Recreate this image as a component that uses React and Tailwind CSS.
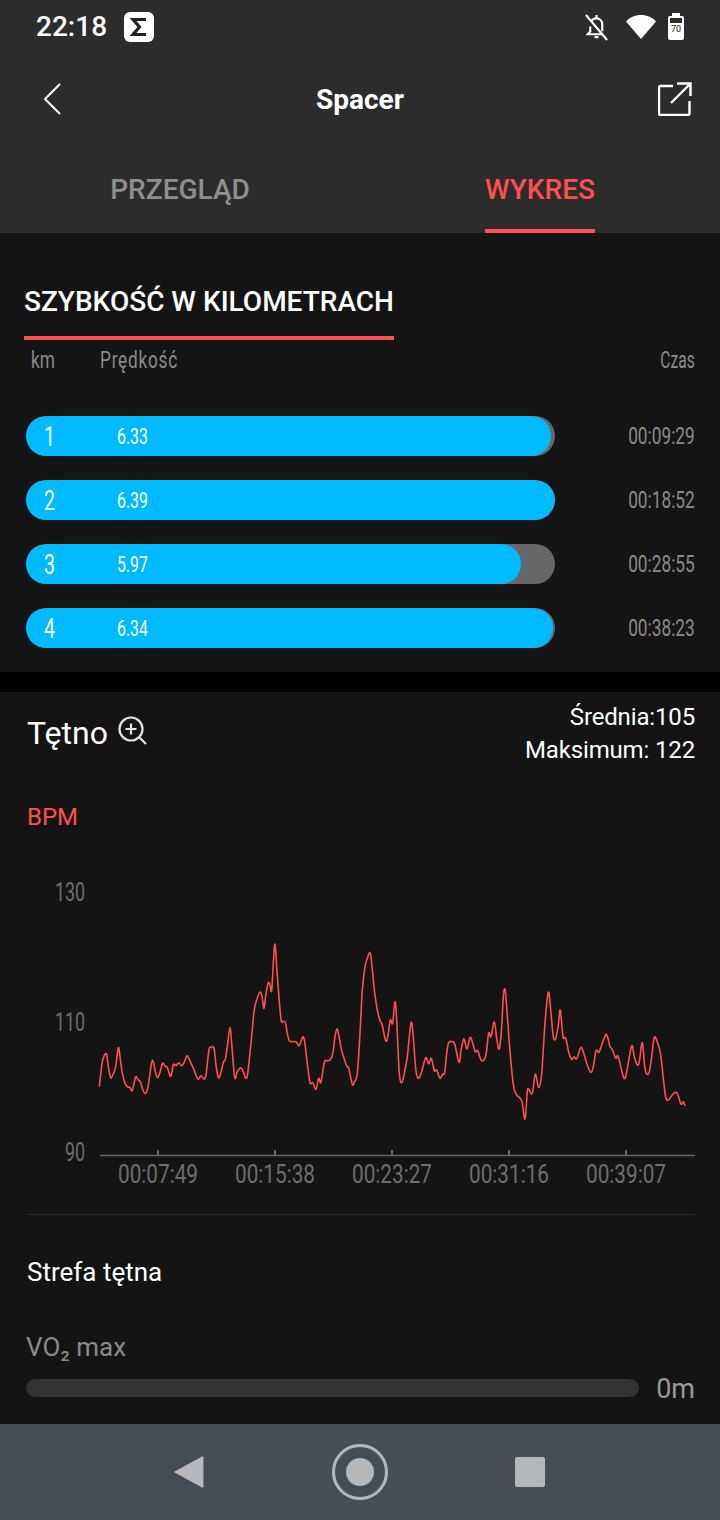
const kmRows = [
  { km: 1, speed: "6.33", time: "00:09:29", fill: "w-[525px]" },
  { km: 2, speed: "6.39", time: "00:18:52", fill: "w-[529px]" },
  { km: 3, speed: "5.97", time: "00:28:55", fill: "w-[495px]" },
  { km: 4, speed: "6.34", time: "00:38:23", fill: "w-[527px]" },
];

// traced from the reference at 3x, crop origin x=90 / x=390, y=930
const partA = [28,470,36,400,42,378,50,373,55,410,62,443,68,435,76,415,85,354,90,380,96,425,105,460,112,470,120,473,126,483,131,465,137,440,145,450,151,455,158,478,165,490,171,483,178,445,185,397,190,395,197,430,203,443,209,430,218,400,225,408,232,413,241,439,246,425,250,403,258,407,266,398,275,407,282,398,291,378,298,388,310,415,322,445,327,446,333,437,342,447,348,435,357,360,364,352,372,354,378,405,385,443,392,430,400,397,406,388,413,340,420,292,425,340,434,442,442,425,452,413,460,425,467,445,473,430,483,340,492,245,500,210,511,186,517,205,522,235,528,190,535,158,540,165,545,182,550,100,555,42,560,110,566,190,573,268,578,275,586,277,592,310,598,332,606,335,618,335,628,347,638,321,644,335,652,400,660,458,668,458,678,478,686,445,693,457,703,397,710,392,720,390,728,372,735,320,741,296,747,320,755,362,762,385,770,408,776,415,787,463,793,457,802,430,810,310,817,180,825,110,832,85,841,70,848,130,853,180,862,240,870,272,876,282,885,325,890,333,895,310,901,270,908,280,915,215,920,270];
const partB = [28,430,36,457,45,420,52,380,60,300,65,277,70,320,77,415,85,445,95,425,107,383,116,402,124,385,133,422,140,420,150,445,158,432,164,428,170,370,176,338,188,335,195,345,207,397,214,355,222,326,231,357,240,323,247,335,256,365,263,362,272,388,280,392,288,375,296,310,303,320,313,275,320,325,328,357,335,290,340,200,345,178,350,230,358,340,365,420,372,475,380,495,395,512,405,567,412,485,416,478,427,490,436,432,446,473,455,430,465,280,475,187,482,240,490,320,497,325,505,285,511,240,519,320,527,325,537,370,545,388,553,380,560,386,572,353,580,365,590,400,602,427,610,410,618,362,627,367,635,345,647,314,653,322,660,350,667,358,677,385,685,380,702,445,712,415,725,347,733,380,742,405,748,395,757,338,764,410,770,432,778,425,785,380,793,322,803,340,812,375,826,495,835,510,845,497,853,489,862,490,873,522,880,515,885,528];

function toPoints(raw, originX) {
  const pts = [];
  for (let i = 0; i < raw.length; i += 2) {
    pts.push([originX + raw[i] / 3, 930 + raw[i + 1] / 3]);
  }
  return pts;
}

function smoothPath(pts) {
  let d = `M${pts[0][0]} ${pts[0][1]}`;
  for (let i = 0; i < pts.length - 1; i++) {
    const p0 = pts[i - 1] || pts[i];
    const p1 = pts[i];
    const p2 = pts[i + 1];
    const p3 = pts[i + 2] || p2;
    const c1x = p1[0] + (p2[0] - p0[0]) / 6;
    const c1y = p1[1] + (p2[1] - p0[1]) / 6;
    const c2x = p2[0] - (p3[0] - p1[0]) / 6;
    const c2y = p2[1] - (p3[1] - p1[1]) / 6;
    d += `C${c1x.toFixed(1)} ${c1y.toFixed(1)} ${c2x.toFixed(1)} ${c2y.toFixed(1)} ${p2[0].toFixed(1)} ${p2[1].toFixed(1)}`;
  }
  return d;
}

const heartPath = smoothPath([...toPoints(partA, 90), ...toPoints(partB, 390)]);

const xTicks = [
  { x: 158, label: "00:07:49" },
  { x: 275, label: "00:15:38" },
  { x: 392, label: "00:23:27" },
  { x: 509, label: "00:31:16" },
  { x: 626, label: "00:39:07" },
];

const yLabels = [
  { y: 901, label: "130" },
  { y: 1031, label: "110" },
  { y: 1161, label: "90" },
];

function StatusBar() {
  return (
    <div className="h-[54px] flex items-center pl-[36px] pr-[36px]">
      <span className="text-[28px] font-medium text-white leading-none">22:18</span>
      <div className="ml-[17px] w-[30px] h-[30px] rounded-[6px] bg-white flex items-center justify-center">
        <svg width="18" height="20" viewBox="0 0 18 20" fill="none" stroke="#222" strokeWidth="3.2">
          <path d="M16 2.5H3l6.5 7.500L3 17.500h13" />
        </svg>
      </div>
      <div className="ml-auto flex items-center">
        <svg width="25" height="27" viewBox="0 0 26 28" fill="none" stroke="#fff" strokeWidth="2.2">
          <path d="M7 8.500c1-2.500 3-4 6-4s6 2.200 6 6.500v7M6.500 13v5l-2.500 3h16" />
          <path d="M13 1v3M11 24h4M2 1l22 26" />
        </svg>
        <svg className="ml-[16px]" width="32" height="26" viewBox="0 0 32 26" fill="#fff">
          <path d="M16 25L1 7.500C4.500 3.500 10 1 16 1s11.500 2.500 15 6.500z" />
        </svg>
        <div className="ml-[11px] relative w-[16px] h-[24px] mt-[2px] rounded-[2px] bg-white">
          <div className="absolute -top-[3px] left-[4px] w-[8px] h-[3px] bg-white" />
          <div className="absolute top-[2px] left-[2px] w-[12px] h-[5px] bg-[#2c2c2c]" />
          <span className="absolute top-[8px] left-0 w-full text-center text-[9px] leading-[10px] text-[#222]">70</span>
        </div>
      </div>
    </div>
  );
}

function Toolbar() {
  return (
    <div className="h-[90px] flex items-center justify-between pl-[34px] pr-[28px]">
      <svg width="28" height="34" viewBox="0 0 28 34" fill="none" stroke="#fff" strokeWidth="2">
        <path d="M26 2L11 17l15 15" />
      </svg>
      <span className="pt-[1px] text-[28px] font-bold text-white">Spacer</span>
      <svg width="34" height="34" viewBox="0 0 34 34" fill="none" stroke="#fff" strokeWidth="2.4">
        <path d="M15 4H2.500a1.500 1.500 0 0 0-1.500 1.500V31.500A1.500 1.500 0 0 0 2.500 33h27.500a1.500 1.500 0 0 0 1.500-1.500V19" />
        <path d="M13 21L32 2M19 1.500h13.500V14" />
      </svg>
    </div>
  );
}

function Tabs() {
  return (
    <div className="h-[89px] grid grid-cols-2">
      <div className="flex justify-center">
        <span className="h-full flex items-center pt-[3px] text-[28px] font-medium text-[#8f8f8f]">PRZEGLĄD</span>
      </div>
      <div className="flex justify-center">
        <span className="h-full flex items-center pt-[7px] border-b-4 border-[#ff4f53] text-[28px] font-medium text-[#ff4f53]">WYKRES</span>
      </div>
    </div>
  );
}

function KmRow({ km, speed, time, fill }) {
  return (
    <div className="h-[40px] flex items-center">
      <div className="relative w-[529px] h-[40px] ml-[26px] rounded-full bg-[#666769] overflow-hidden">
        <div className={`h-full rounded-full bg-[#00baff] flex items-center pt-[1px] text-white ${fill}`}>
          <span className="ml-[18px] w-[73px] text-[28px] scale-x-[0.7] origin-left">{km}</span>
          <span className="text-[22px] scale-x-[0.72] origin-left">{speed}</span>
        </div>
      </div>
      <span className="ml-auto mr-[25px] pt-[3px] text-[23px] text-[#8b8b8b] scale-x-[0.75] origin-right whitespace-nowrap">{time}</span>
    </div>
  );
}

function SpeedSection() {
  return (
    <section className="h-[439px] bg-[#141414] pt-[48px]">
      <div className="ml-[24px] w-[370px] h-[59px] border-b-4 border-[#ff4f53]">
        <span className="block pt-[1px] text-[28px] font-medium leading-[40px] text-white whitespace-nowrap">SZYBKOŚĆ W KILOMETRACH</span>
      </div>
      <div className="h-[40px] flex items-center pt-[3px] text-[23px] text-[#8b8b8b]">
        <span className="ml-[31px] w-[69px] scale-x-[0.75] origin-left">km</span>
        <span className="tracking-[1px] scale-x-[0.75] origin-left">Prędkość</span>
        <span className="ml-auto mr-[25px] scale-x-[0.68] origin-right">Czas</span>
      </div>
      <div className="mt-[36px] flex flex-col gap-[24px]">
        {kmRows.map((row) => (
          <KmRow key={row.km} {...row} />
        ))}
      </div>
    </section>
  );
}

function HeartChart() {
  return (
    <svg className="block w-[720px] h-[320px]" viewBox="0 870 720 320" fill="none">
      {yLabels.map((l) => (
        <text key={l.label} x="85" y={l.y} textAnchor="end" fontSize="26" fill="#6e6e6e" fontFamily="Roboto, sans-serif" textLength={l.label.length * 10} lengthAdjust="spacingAndGlyphs">
          {l.label}
        </text>
      ))}
      <path d="M100 1155.500H695" stroke="#666" strokeWidth="1.500" />
      {xTicks.map((t) => (
        <g key={t.label}>
          <path d={`M${t.x} 1150V1155`} stroke="#666" strokeWidth="2" />
          <text x={t.x} y="1183" textAnchor="middle" fontSize="26" fill="#6e6e6e" fontFamily="Roboto, sans-serif" textLength="80" lengthAdjust="spacingAndGlyphs">
            {t.label}
          </text>
        </g>
      ))}
      <path d={heartPath} stroke="#ff4f53" strokeWidth="1.600" />
    </svg>
  );
}

function HeartSection() {
  return (
    <section className="h-[732px] bg-[#141414]">
      <div className="h-[110px] flex items-start pl-[27px] pr-[25px]">
        <div className="mt-[20px] flex items-center">
          <span className="text-[32px] leading-[42px] text-white">Tętno</span>
          <svg className="ml-[10px] -mt-[5px]" width="30" height="30" viewBox="0 0 30 30" fill="none" stroke="#e4e4e4" strokeWidth="2.200">
            <circle cx="13" cy="13" r="11.500" />
            <path d="M7.500 13h11M13 7.500v11M21.500 21.500l6.500 6.500" />
          </svg>
        </div>
        <div className="ml-auto mt-[9px] text-right text-[24px] leading-[33px] tracking-[-0.15px] text-white">
          <div>Średnia:105</div>
          <div>Maksimum: 122</div>
        </div>
      </div>
      <div className="h-[68px] pl-[27px] text-[24px] leading-[30px] text-[#ff4f53]">BPM</div>
      <HeartChart />
      <div className="mt-[24px] ml-[27px] mr-[25px] border-t border-[#2a2a2a]" />
      <div className="mt-[39px] pl-[27px] text-[26px] leading-[36px] text-white">Strefa tętna</div>
      <div className="mt-[39px] pl-[26px] text-[26px] leading-[36px] text-[#8a8a8a]">VO₂ max</div>
      <div className="mt-[9px] h-[28px] flex items-center pl-[26px] pr-[25px]">
        <div className="w-[613px] h-[18px] rounded-full bg-[#333333]" />
        <span className="ml-auto pt-[3px] text-[27px] text-[#9a9a9a]">0m</span>
      </div>
    </section>
  );
}

function NavBar() {
  return (
    <div className="h-[96px] bg-[#454e55] flex items-center justify-center pr-[2px]">
      <svg width="30" height="34" viewBox="0 0 30 34" fill="#b4b8ba">
        <path d="M28 1.500a1 1 0 0 1 1.500 1v29a1 1 0 0 1-1.500 1L1.500 18a1 1 0 0 1 0-2z" />
      </svg>
      <div className="ml-[128px] w-[56px] h-[56px] rounded-full border-[3px] border-[#b4b8ba] flex items-center justify-center">
        <div className="w-[28px] h-[28px] rounded-full bg-[#b4b8ba]" />
      </div>
      <div className="ml-[127px] w-[30px] h-[30px] rounded-[2px] bg-[#b4b8ba]" />
    </div>
  );
}

export default function App() {
  return (
    <div className="w-[720px] h-[1520px] bg-black overflow-hidden font-['Roboto',sans-serif]">
      <header className="h-[233px] bg-[#2c2c2c]">
        <StatusBar />
        <Toolbar />
        <Tabs />
      </header>
      <SpeedSection />
      <div className="h-[20px] bg-black" />
      <HeartSection />
      <NavBar />
    </div>
  );
}
